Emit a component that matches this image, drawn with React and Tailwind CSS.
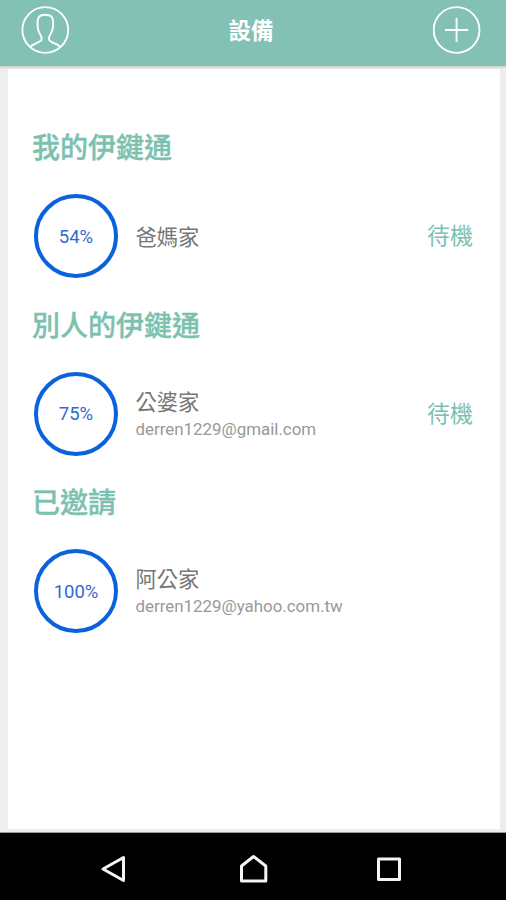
const sections = [
  { title: '我的伊鍵通', battery: '54%', name: '爸媽家', status: '待機' },
  { title: '別人的伊鍵通', battery: '75%', name: '公婆家', email: 'derren1229@gmail.com', status: '待機' },
  { title: '已邀請', battery: '100%', name: '阿公家', email: 'derren1229@yahoo.com.tw' },
];

function ProfileIcon() {
  return (
    <svg className="h-12 w-12" viewBox="0 0 48 48" fill="none" stroke="white" strokeWidth="1.9">
      <circle cx="24.3" cy="24" r="22.9" />
      <path d="M9.5 41 C11.5 37.5 19.5 37 20.5 33.5 C21 31 20 29.5 18.7 27.5 C16.8 24.5 16.5 21.5 16.5 17.5 C16.5 11 18.5 8.7 24.3 8.7 C30.2 8.7 32.2 11 32.2 17.5 C32.2 21.5 31.8 24.5 29.8 27.5 C28.5 29.5 27.6 31 28.1 33.5 C29 37 37 37.5 39.2 41" />
    </svg>
  );
}

function AddIcon() {
  return (
    <svg className="h-12 w-12" viewBox="0 0 48 48" fill="none" stroke="white" strokeWidth="1.9">
      <circle cx="23.6" cy="24" r="22.9" />
      <path d="M23.6 12v24M12 24h23.2" />
    </svg>
  );
}

function Section({ title, battery, name, email, status }) {
  return (
    <section className="h-[177.5px] pr-[27px] pl-6">
      <h2 className="h-11 text-[28px] leading-[46px] font-medium text-[#7cc1b0] [-webkit-text-stroke:0.35px_#7cc1b0]">{title}</h2>
      <div className="flex h-[132px] items-center">
        <div className="ml-[2px] flex h-[84px] w-[84px] shrink-0 items-center justify-center rounded-full border-4 border-[#0a62dc] pt-[3px] text-[18.5px] text-[#2f6bd0]">
          {battery}
        </div>
        <div className="ml-[17.5px] flex-1 pt-1">
          <div className="text-[21.3px] leading-[26px] text-[#777]">{name}</div>
          {email && <div className="text-[16.9px] leading-[26px] text-[#999]">{email}</div>}
        </div>
        {status && <div className="pt-[3px] text-[23px] text-[#7cc1b0]">{status}</div>}
      </div>
    </section>
  );
}

export default function App() {
  return (
    <div className="flex h-[900px] w-[506px] flex-col overflow-hidden bg-[#eeeeee] font-[Roboto,'Noto_Sans_CJK_TC',sans-serif]">
      <header className="flex h-[66px] shrink-0 items-start justify-between bg-[#82c1b4] pt-[6px] pr-[25px] pl-[21px] shadow-[0_1px_3px_rgba(0,0,0,0.2)]">
        <ProfileIcon />
        <h1 className="text-[22.5px] leading-[50px] font-bold text-white">設備</h1>
        <AddIcon />
      </header>
      <main className="mt-[3px] mr-[6px] ml-2 h-[760px] shrink-0 bg-white pt-[57px]">
        {sections.map((s) => (
          <Section key={s.title} {...s} />
        ))}
      </main>
      <nav className="mt-[3px] h-[68px] shrink-0 border-t border-[#999] bg-black">
        <svg className="h-[67px] w-[506px]" viewBox="0 833 506 67" fill="none" stroke="#f4f4f4" strokeWidth="3" strokeLinejoin="round">
          <path d="M103 869 L123.5 857.5 V880.5 Z" />
          <path d="M241.5 866 L253.5 856.5 L265.8 866 V881 H241.5 Z" />
          <rect x="378.5" y="859" width="21" height="20.5" />
        </svg>
      </nav>
    </div>
  );
}
